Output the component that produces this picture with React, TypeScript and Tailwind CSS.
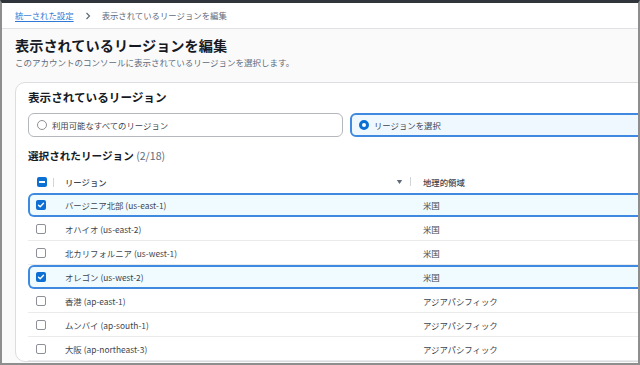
import React from "react";

const rows = [
  { name: "バージニア北部 (us-east-1)", geo: "米国", checked: true },
  { name: "オハイオ (us-east-2)", geo: "米国", checked: false },
  { name: "北カリフォルニア (us-west-1)", geo: "米国", checked: false },
  { name: "オレゴン (us-west-2)", geo: "米国", checked: true },
  { name: "香港 (ap-east-1)", geo: "アジアパシフィック", checked: false },
  { name: "ムンバイ (ap-south-1)", geo: "アジアパシフィック", checked: false },
  { name: "大阪 (ap-northeast-3)", geo: "アジアパシフィック", checked: false },
];

function Checkbox({ checked }: { checked: boolean }) {
  if (checked) {
    return (
      <span className="flex h-[10px] w-[10px] items-center justify-center rounded-[2px] bg-[#0b6fd4]">
        <svg width="8" height="8" viewBox="0 0 8 8" fill="none">
          <path d="M1.5 4.2 3.2 5.8 6.5 2.2" stroke="white" strokeWidth="1.4" strokeLinecap="round" strokeLinejoin="round" />
        </svg>
      </span>
    );
  }
  return <span className="block h-[10px] w-[10px] rounded-[2px] border border-[#8d9096] bg-white" />;
}

export default function App() {
  return (
    <div
      className="h-[365px] w-[640px] overflow-hidden border-x-2 border-b-2 border-t-[3px] border-x-[#8e8e8e] border-b-[#8e8e8e] border-t-[#30353c] bg-[#fafafa] text-[#3d4550]"
      style={{ fontFamily: '"Noto Sans CJK JP", "Noto Sans", sans-serif' }}
    >
      {/* breadcrumb */}
      <div className="flex h-[26px] items-center gap-[8px] border-b border-[#dfe1e4] bg-white pl-[13px] text-[8.4px]">
        <span className="text-[#2f7ad6] underline decoration-[#2f7ad6] underline-offset-2">統一された設定</span>
        <svg width="8" height="8" viewBox="0 0 8 8" fill="none" className="mx-[2px]">
          <path d="M2.5 1 5.5 4 2.5 7" stroke="#5f6b7a" strokeWidth="1.2" />
        </svg>
        <span className="text-[#5f6b7a]">表示されているリージョンを編集</span>
      </div>

      <div className="pl-[13px]">
        <h1 className="mt-[7px] text-[14.2px] font-bold leading-[18px] text-[#16191f]">表示されているリージョンを編集</h1>
        <p className="mt-[2px] text-[8.5px] leading-[12px] text-[#5f6b7a]">
          このアカウントのコンソールに表示されているリージョンを選択します。
        </p>

        {/* card */}
        <div className="mt-[14px] w-[700px] rounded-[10px] border border-[#dcdde0] bg-white pl-[12px] pt-[7px]">
          <h2 className="text-[11.6px] font-bold leading-[15px] text-[#16191f]">表示されているリージョン</h2>

          <div className="mt-[8px] flex gap-[7px]">
            <div className="flex h-[24px] w-[315px] items-center gap-[5px] rounded-[6px] border border-[#b4b7bc] pl-[8px] text-[8.4px]">
              <span className="block h-[10px] w-[10px] rounded-full border border-[#8d9096]" />
              <span>利用可能なすべてのリージョン</span>
            </div>
            <div className="flex h-[24px] w-[315px] items-center gap-[5px] rounded-[6px] border-2 border-[#3f8ae0] bg-[#f0f8ff] pl-[7px] text-[8.4px]">
              <span className="block h-[10px] w-[10px] rounded-full border-[3px] border-[#0b6fd4] bg-white" />
              <span>リージョンを選択</span>
            </div>
          </div>

          <h3 className="mt-[12px] text-[10.6px] font-bold leading-[14px] text-[#16191f]">
            選択されたリージョン <span className="font-normal text-[#5f6b7a]">(2/18)</span>
          </h3>

          {/* table */}
          <div className="mt-[8px]">
            <div className="flex h-[22px] items-center text-[8.4px] font-medium">
              <div className="flex w-[37px] items-center pl-[9px]">
                <span className="flex h-[10px] w-[10px] items-center justify-center rounded-[2px] bg-[#0b6fd4]">
                  <span className="block h-[1.5px] w-[6px] bg-white" />
                </span>
                <span className="ml-[6px] block h-[9px] w-px bg-[#d1d5db]" />
              </div>
              <div className="flex w-[358px] items-center pr-[12px]">
                <span className="flex-1">リージョン</span>
                <svg width="7" height="6" viewBox="0 0 7 6" className="mr-[7px]">
                  <path d="M0.8 1 6.2 1 3.5 5Z" fill="#5f6b7a" />
                </svg>
                <span className="block h-[9px] w-px bg-[#d1d5db]" />
              </div>
              <div>地理的領域</div>
            </div>

            {rows.map((r) => (
              <div
                key={r.name}
                className={
                  r.checked
                    ? "flex h-[24px] items-center rounded-l-[6px] bg-[#f0fbff] text-[8.4px] shadow-[inset_0_0_0_2px_#3f8ae0]"
                    : "flex h-[24px] items-center text-[8.4px] shadow-[inset_0_-1px_0_#e9ebed]"
                }
              >
                <div className="w-[37px] pl-[8px]">
                  <Checkbox checked={r.checked} />
                </div>
                <div className="w-[358px]">{r.name}</div>
                <div>{r.geo}</div>
              </div>
            ))}
          </div>
        </div>
      </div>
    </div>
  );
}
